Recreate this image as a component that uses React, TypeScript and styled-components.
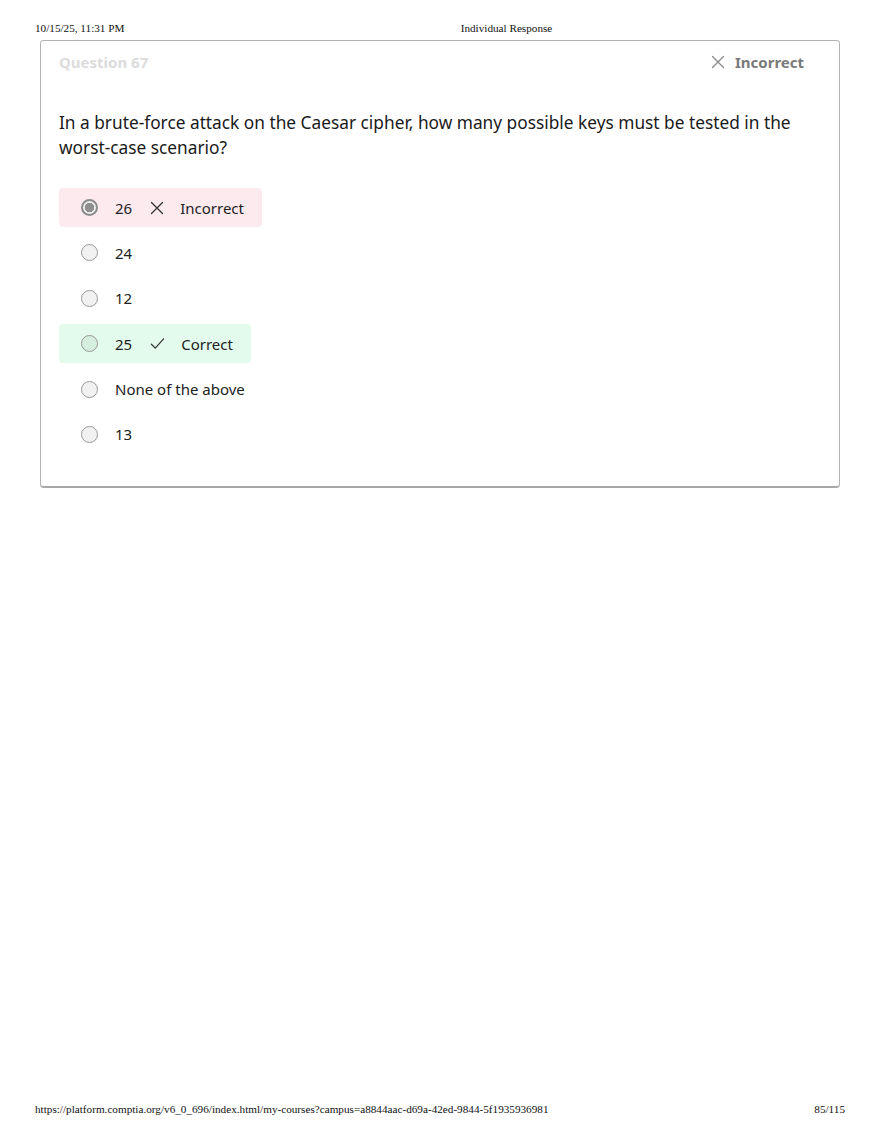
import styled, { createGlobalStyle } from "styled-components";

const GlobalStyle = createGlobalStyle`
  html, body {
    margin: 0;
    padding: 0;
    background: #ffffff;
  }
  * {
    box-sizing: border-box;
  }
`;

type Status = "incorrect" | "correct" | "none";

interface Option {
  label: string;
  status: Status;
  selected?: boolean;
}

const options: Option[] = [
  { label: "26", status: "incorrect", selected: true },
  { label: "24", status: "none" },
  { label: "12", status: "none" },
  { label: "25", status: "correct" },
  { label: "None of the above", status: "none" },
  { label: "13", status: "none" },
];

const CrossIcon = ({ size = 14, color = "#333" }: { size?: number; color?: string }) => (
  <svg width={size} height={size} viewBox="0 0 14 14" fill="none">
    <path d="M1.5 1.5 L12.5 12.5 M12.5 1.5 L1.5 12.5" stroke={color} strokeWidth="1.3" strokeLinecap="round" />
  </svg>
);

const CheckIcon = ({ size = 16, color = "#333" }: { size?: number; color?: string }) => (
  <svg width={size} height={size} viewBox="0 0 16 16" fill="none">
    <path d="M1.5 8.8 L5.6 13 L14.5 3" stroke={color} strokeWidth="1.3" strokeLinecap="round" strokeLinejoin="round" />
  </svg>
);

const App = () => {
  return (
    <>
      <GlobalStyle />
      <Page>
        <PrintHeader>
          <span>10/15/25, 11:31 PM</span>
          <Title>Individual Response</Title>
          <span />
        </PrintHeader>

        <Card>
          <CardHeader>
            <QuestionNumber>Question 67</QuestionNumber>
            <Verdict>
              <CrossIcon size={14} color="#8a8a8a" />
              Incorrect
            </Verdict>
          </CardHeader>

          <QuestionText>
            In a brute-force attack on the Caesar cipher, how many possible keys must be tested in the
            worst-case scenario?
          </QuestionText>

          <OptionList>
            {options.map((opt) => (
              <OptionRow key={opt.label} $status={opt.status}>
                <Radio $selected={!!opt.selected} $status={opt.status} />
                <OptionLabel>{opt.label}</OptionLabel>
                {opt.status === "incorrect" && (
                  <Feedback>
                    <CrossIcon size={14} color="#333" />
                    Incorrect
                  </Feedback>
                )}
                {opt.status === "correct" && (
                  <Feedback>
                    <CheckIcon size={15} color="#333" />
                    Correct
                  </Feedback>
                )}
              </OptionRow>
            ))}
          </OptionList>
        </Card>

        <PrintFooter>
          <span>https://platform.comptia.org/v6_0_696/index.html/my-courses?campus=a8844aac-d69a-42ed-9844-5f1935936981</span>
          <span>85/115</span>
        </PrintFooter>
      </Page>
    </>
  );
};

export default App;

const Page = styled.div`
  min-height: 1139px;
  display: flex;
  flex-direction: column;
  padding: 22px 35px 23px;
  font-family: "Liberation Serif", "Times New Roman", serif;
`;

const PrintHeader = styled.div`
  display: grid;
  grid-template-columns: 1fr auto 1fr;
  font-size: 11.2px;
  line-height: 13px;
  color: #111;
`;

const Title = styled.span`
  text-align: center;
  padding-left: 133px;
`;

const Card = styled.div`
  margin: 5px 0 0 5px;
  width: 800px;
  border: 1px solid #b3b3b3;
  border-bottom: 2px solid #a8a8a8;
  border-radius: 4px;
  padding: 10px 35px 32px 18px;
  font-family: "Noto Sans", "Open Sans", sans-serif;
`;

const CardHeader = styled.div`
  display: flex;
  align-items: center;
  justify-content: space-between;
  height: 22px;
`;

const QuestionNumber = styled.span`
  font-size: 15px;
  font-weight: 700;
  color: #dcdcdc;
`;

const Verdict = styled.span`
  display: flex;
  align-items: center;
  gap: 10px;
  font-size: 15px;
  font-weight: 700;
  color: #7a7a7a;
`;

const QuestionText = styled.p`
  margin: 37px 0 0;
  font-size: 17.3px;
  line-height: 25px;
  color: #1a1a1a;
`;

const OptionList = styled.div`
  display: flex;
  flex-direction: column;
  align-items: flex-start;
  gap: 6.4px;
  margin-top: 28px;
`;

const rowBackground = (s: Status) =>
  s === "incorrect" ? "#fdeaee" : s === "correct" ? "#e2fbec" : "transparent";

const OptionRow = styled.div<{ $status: Status }>`
  display: flex;
  align-items: center;
  height: 39px;
  padding: 0 18px 0 22px;
  border-radius: 4px;
  background: ${({ $status }) => rowBackground($status)};
  font-size: 15px;
  color: #222;
`;

const Radio = styled.span<{ $selected: boolean; $status: Status }>`
  width: 17px;
  height: 17px;
  border-radius: 50%;
  flex-shrink: 0;
  border: ${({ $selected }) => ($selected ? "2px solid #8c8c8c" : "1px solid #9a9a9a")};
  background: ${({ $selected, $status }) =>
    $selected
      ? "radial-gradient(circle, #8f8f8f 0 4.5px, #ececec 5px)"
      : $status === "correct"
      ? "#d6eedd"
      : "#f1f1f1"};
  margin-right: 17px;
`;

const OptionLabel = styled.span`
  line-height: 20px;
`;

const Feedback = styled.span`
  display: flex;
  align-items: center;
  gap: 16px;
  margin-left: 18px;
  line-height: 20px;
`;

const PrintFooter = styled.div`
  margin-top: auto;
  display: flex;
  justify-content: space-between;
  font-size: 11.2px;
  line-height: 13px;
  color: #111;
`;
